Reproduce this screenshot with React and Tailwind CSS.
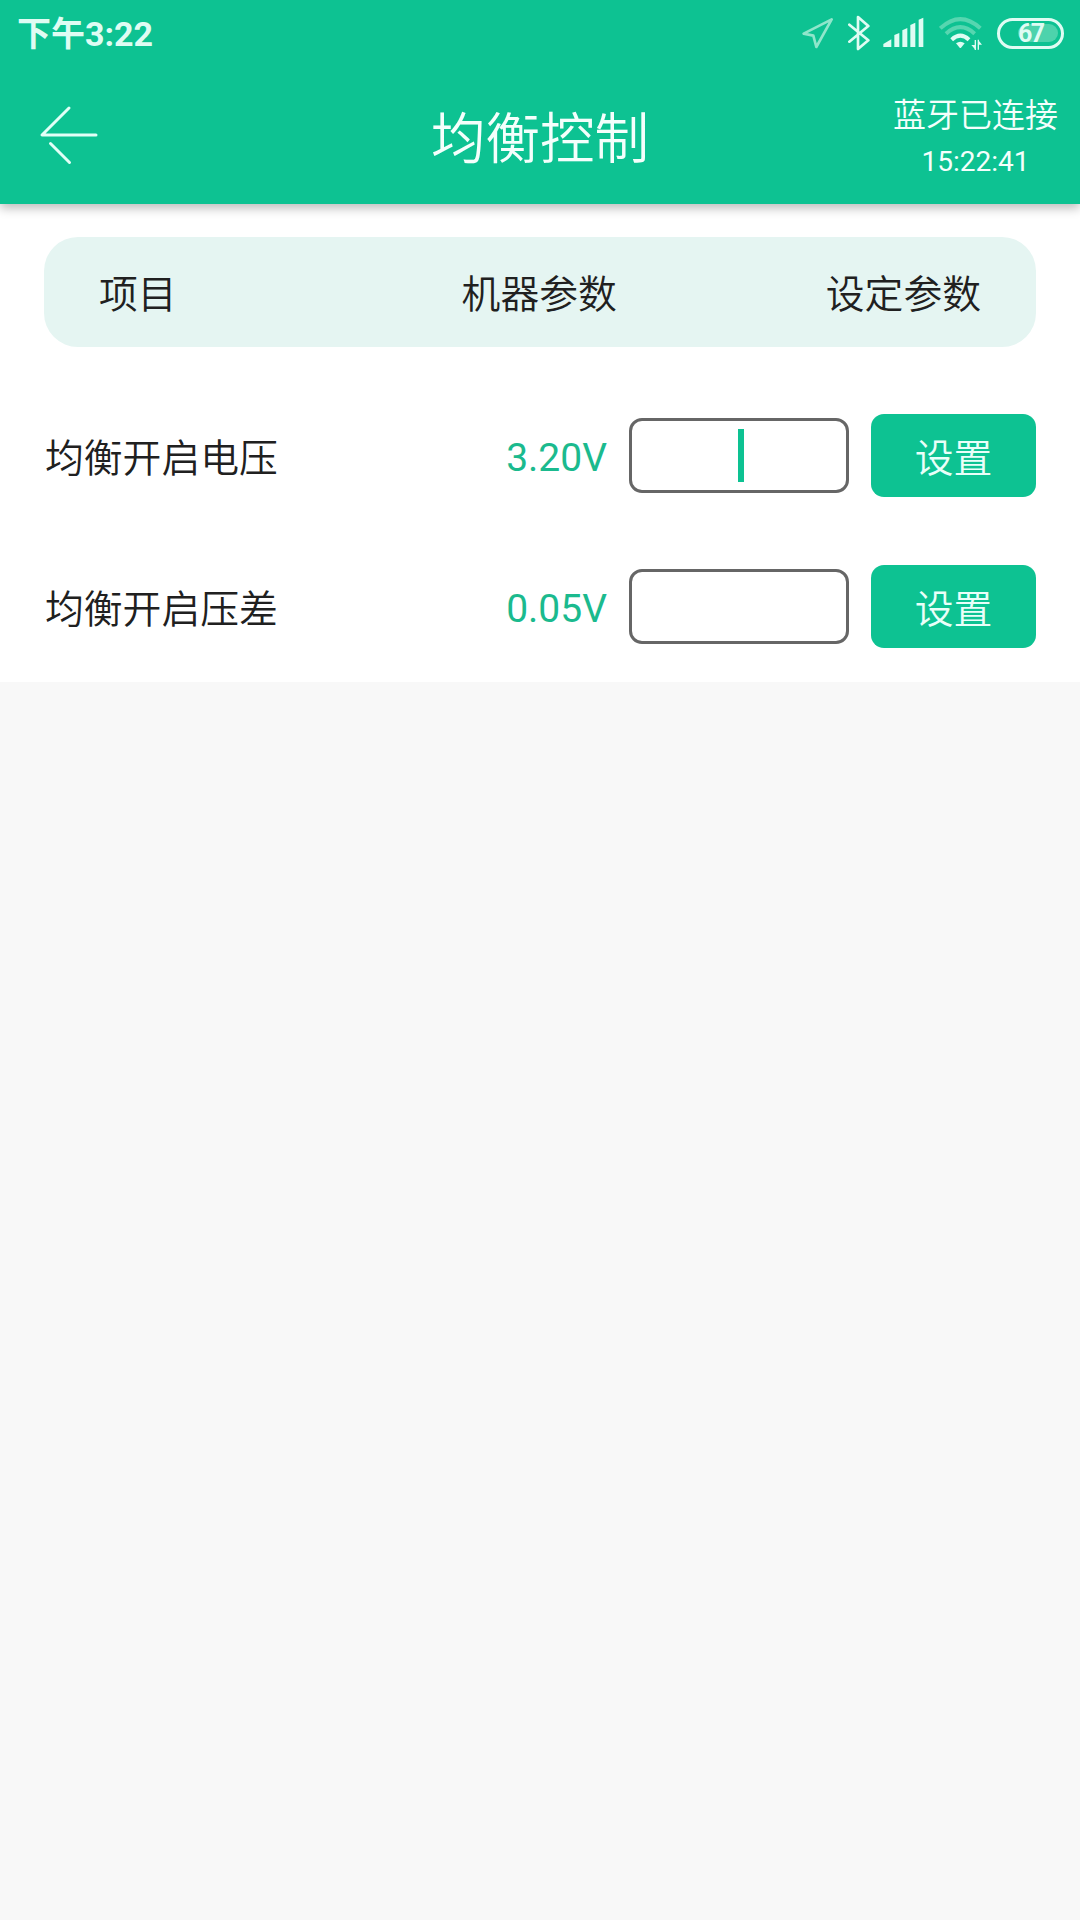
import React, { useState } from "react";

const rows = [
  { id: "voltage", label: "均衡开启电压", value: "3.20V" },
  { id: "diff", label: "均衡开启压差", value: "0.05V" },
];

const StatusBar = () => (
  <div className="flex h-[66px] items-center justify-between pl-[17px] pr-[16px] text-[#dffcf3]">
    <span className="pt-[2px] text-[34px] leading-none font-bold">下午3:22</span>

    <div className="flex h-[70px] items-center">
      {/* Location */}
      <svg className="mr-[14px] h-[34px] w-[32px]" viewBox="36 50 96 102" fill="none">
        <path
          d="M125 60 L41 103 L70 109 L79 143 Z"
          stroke="#8fe6cb"
          strokeWidth="8"
          strokeLinejoin="round"
        />
      </svg>
      {/* Bluetooth */}
      <svg className="mr-[13px] h-[36px] w-[22px]" viewBox="173 45 66 108" fill="none">
        <path
          d="M177 74 L234 121 L203 147 V51 L234 78 L177 125"
          stroke="currentColor"
          strokeWidth="8"
          strokeLinecap="round"
          strokeLinejoin="round"
        />
      </svg>
      {/* Signal */}
      <svg className="mr-[15px] h-[34px] w-[41px]" viewBox="278 48 123 102" fill="currentColor">
        <path d="M279 141 V132 L303 118 V141 Z" />
        <path d="M312 141 V105 L327 99 V141 Z" />
        <path d="M336 141 V91 L351 84 V141 Z" />
        <path d="M360 141 V75 L375 68 V141 Z" />
        <path d="M385 141 V59 L399 53 V141 Z" />
      </svg>
      {/* Wifi */}
      <svg className="mr-[15px] h-[36px] w-[43px]" viewBox="446 48 129 108" fill="none">
        <path d="M450 88 Q510 33 570 88" stroke="#56d6b0" strokeWidth="12" />
        <path d="M467 104 Q510 65 553 104" stroke="#56d6b0" strokeWidth="12" />
        <path d="M484 122 Q510 98 536 122" stroke="currentColor" strokeWidth="12" />
        <path d="M497 133 Q510 124 523 133 L512 146 Q510 148 508 146 Z" fill="currentColor" />
        <path d="M555 123 V153 M564 122 V152" stroke="currentColor" strokeWidth="4" />
        <path d="M556 153 L543 138 H556 Z M563 122 L575 137 H563 Z" fill="currentColor" />
      </svg>
      {/* Battery */}
      <div className="flex h-[31px] w-[67px] items-center justify-end rounded-full border-[3px] border-current pr-[3px]">
        <div className="flex h-[18px] w-[40px] items-center rounded-full bg-[#4dd3ac]">
          <span className="text-[25px] leading-none font-bold tracking-[-1.5px]">67</span>
        </div>
      </div>
    </div>
  </div>
);

const Header = () => (
  <header className="relative h-[204px] bg-[#0dc292] shadow-[0_4px_10px_0_rgba(0,0,0,0.27)]">
    <StatusBar />
    <div className="grid h-[138px] grid-cols-3 items-center text-[#f4fffc]">
      <button type="button" className="ml-[38px] h-[62px] w-[64px]">
        <svg className="h-[62px] w-[64px]" viewBox="38 104 64 62" fill="none">
          <path
            d="M69 108 L42 135 H96 M50.5 143.5 L69.5 162.5"
            stroke="#e2fff7"
            strokeWidth="3"
            strokeLinecap="round"
            strokeLinejoin="round"
          />
        </svg>
      </button>
      <h1 className="pt-[9px] text-center text-[54.5px] leading-none font-[350]">均衡控制</h1>
      <div className="flex flex-col items-center justify-self-end pt-[7px] pr-[22px]">
        <span className="text-[33px] leading-[46px] font-[350]">蓝牙已连接</span>
        <span className="text-[28px] leading-[46px]">15:22:41</span>
      </div>
    </div>
  </header>
);

const ParamRow = ({ label, value, focused, input, onChange }) => (
  <div className="flex h-[151px] items-center pr-[44px] pl-[45px]">
    <span className="flex-1 pt-[7px] text-[38.8px] leading-none font-[350] text-[#202020]">{label}</span>
    <span className="mr-[22px] pt-[5px] text-[39px] leading-none text-[#1bba8e]">{value}</span>
    <div className="relative mr-[22px] h-[75px] w-[220px]">
      <input
        type="text"
        className="h-full w-full rounded-[13px] border-[3px] border-[#666] bg-white text-center text-[39px] outline-none"
        value={input}
        onChange={(e) => onChange(e.target.value)}
      />
      {focused && !input && (
        <span className="absolute top-[11px] left-[109px] h-[53px] w-[6px] bg-[#0dc292]" />
      )}
    </div>
    <button
      type="button"
      className="h-[83px] w-[165px] rounded-[13px] bg-[#0dc292] pt-[7px] text-[38.8px] leading-none font-[350] text-[#e9fff9]"
    >
      设置
    </button>
  </div>
);

const App = () => {
  const [values, setValues] = useState({ voltage: "", diff: "" });

  return (
    <div className="h-[1920px] w-[1080px] overflow-hidden bg-[#f8f8f8] font-[Roboto,'Noto_Sans_CJK_SC',sans-serif]">
      <Header />
      <main className="h-[478px] bg-white pt-[33px]">
        <div className="mx-[44px] mb-[33px] flex h-[110px] items-center justify-between rounded-[34px] bg-[#e5f5f2] px-[55px] pt-[6px] text-[38.8px] leading-none font-[350] text-[#202020]">
          <span>项目</span>
          <span className="pl-[76px]">机器参数</span>
          <span>设定参数</span>
        </div>
        {rows.map((row) => (
          <ParamRow
            key={row.id}
            label={row.label}
            value={row.value}
            focused={row.id === "voltage"}
            input={values[row.id]}
            onChange={(v) => setValues({ ...values, [row.id]: v })}
          />
        ))}
      </main>
    </div>
  );
};

export default App;
